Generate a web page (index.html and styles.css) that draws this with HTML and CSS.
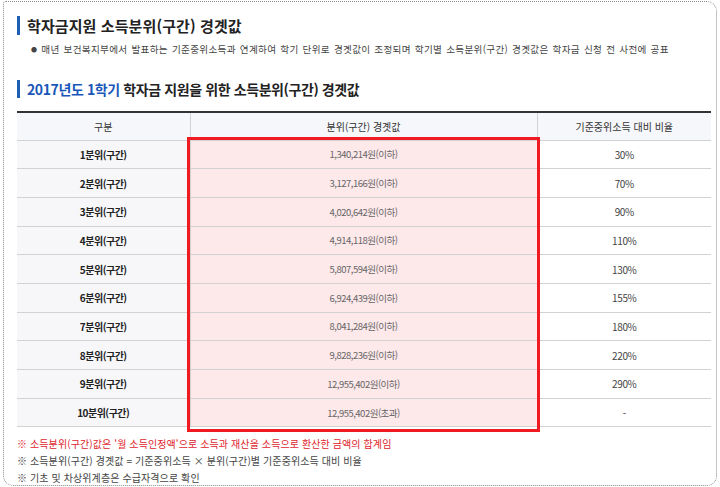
FILE: index.html
```html
<!DOCTYPE html>
<html lang="ko">
<head>
<meta charset="utf-8">
<link rel="stylesheet" href="styles.css">
</head>
<body>
<div class="frame">
  <h2 class="title t1">학자금지원 소득분위(구간) 경곗값</h2>
  <p class="bullet"><span class="dot">●</span>매년 보건복지부에서 발표하는 기준중위소득과 연계하여 학기 단위로 경곗값이 조정되며 학기별 소득분위(구간) 경곗값은 학자금 신청 전 사전에 공표</p>
  <h2 class="title t2"><span class="blue">2017년도 1학기</span> 학자금 지원을 위한 소득분위(구간) 경곗값</h2>
  <div class="tablewrap">
    <table class="grid">
      <thead>
        <tr><th>구분</th><th>분위(구간) 경곗값</th><th>기준중위소득 대비 비율</th></tr>
      </thead>
      <tbody>
        <tr><td class="k">1분위(구간)</td><td class="v">1,340,214원(이하)</td><td class="r">30%</td></tr>
        <tr><td class="k">2분위(구간)</td><td class="v">3,127,166원(이하)</td><td class="r">70%</td></tr>
        <tr><td class="k">3분위(구간)</td><td class="v">4,020,642원(이하)</td><td class="r">90%</td></tr>
        <tr><td class="k">4분위(구간)</td><td class="v">4,914,118원(이하)</td><td class="r">110%</td></tr>
        <tr><td class="k">5분위(구간)</td><td class="v">5,807,594원(이하)</td><td class="r">130%</td></tr>
        <tr><td class="k">6분위(구간)</td><td class="v">6,924,439원(이하)</td><td class="r">155%</td></tr>
        <tr><td class="k">7분위(구간)</td><td class="v">8,041,284원(이하)</td><td class="r">180%</td></tr>
        <tr><td class="k">8분위(구간)</td><td class="v">9,828,236원(이하)</td><td class="r">220%</td></tr>
        <tr><td class="k">9분위(구간)</td><td class="v">12,955,402원(이하)</td><td class="r">290%</td></tr>
        <tr><td class="k">10분위(구간)</td><td class="v">12,955,402원(초과)</td><td class="r">-</td></tr>
      </tbody>
    </table>
    <div class="highlight"></div>
  </div>
  <p class="note red">※ 소득분위(구간)값은 '월 소득인정액'으로 소득과 재산을 소득으로 환산한 금액의 합계임</p>
  <p class="note">※ 소득분위(구간) 경곗값 = 기준중위소득 × 분위(구간)별 기준중위소득 대비 비율</p>
  <p class="note">※ 기초 및 차상위계층은 수급자격으로 확인</p>
</div>
</body>
</html>
```

FILE: styles.css
```css
* { box-sizing: border-box; }
html, body { margin: 0; padding: 0; background: #fff; }
body {
  font-family: "Noto Sans CJK KR", "Noto Sans", sans-serif;
  color: #333;
}
.frame {
  margin: 1px 0 0 3px;
  width: 714px;
  height: 485px;
  border: 1px dotted #8a8a8a;
  border-radius: 3px 10px 10px 10px;
  padding: 14px 0 0 13px;
}
.title {
  margin: 0;
  border-left: 3px solid #1d5fb3;
  padding-left: 7px;
  font-weight: bold;
  color: #222;
}
.t1 { font-size: 15px; line-height: 19px; height: 19px; letter-spacing: 0.1px; }
.t2 { font-size: 14px; line-height: 18px; height: 18px; margin-top: 23px; letter-spacing: -0.4px; }
.blue { color: #1a57b9; }
.bullet {
  margin: 7px 0 0 14px;
  font-size: 9.6px;
  line-height: 14px;
  color: #444;
  letter-spacing: 0.3px;
  word-spacing: 1px;
}
.dot { font-size: 6px; margin-right: 4px; vertical-align: 1px; }
.tablewrap {
  position: relative;
  margin-top: 13px;
  width: 694px;
}
.grid {
  width: 694px;
  border-collapse: collapse;
  table-layout: fixed;
  border-top: 2px solid #333;
  font-size: 10px;
}
.grid th, .grid td {
  border: 1px solid #d2d2d2;
  text-align: center;
  padding: 0;
  height: 28.7px;
}
.grid tr > :first-child { border-left: none; width: 173px; }
.grid tr > :last-child { border-right: none; width: 174px; }
.grid th {
  height: 28px;
  background: #f6f7fb;
  font-weight: normal;
  color: #333;
}
.grid td.k { background: #f7f7f9; font-weight: bold; color: #222; letter-spacing: -0.5px; }
.grid td.v { background: #fde8ea; color: #666; font-size: 9.5px; letter-spacing: -0.5px; }
.grid td.r { background: #fff; color: #444; letter-spacing: -0.4px; }
.highlight {
  position: absolute;
  left: 170px;
  top: 26px;
  width: 353px;
  height: 295px;
  border: 3px solid #f01a22;
  pointer-events: none;
}
.note {
  margin: 0;
  font-size: 10px;
  line-height: 17px;
  color: #444;
  letter-spacing: 0.1px;
}
.red { color: #e0242c; margin-top: 8px; }
```
